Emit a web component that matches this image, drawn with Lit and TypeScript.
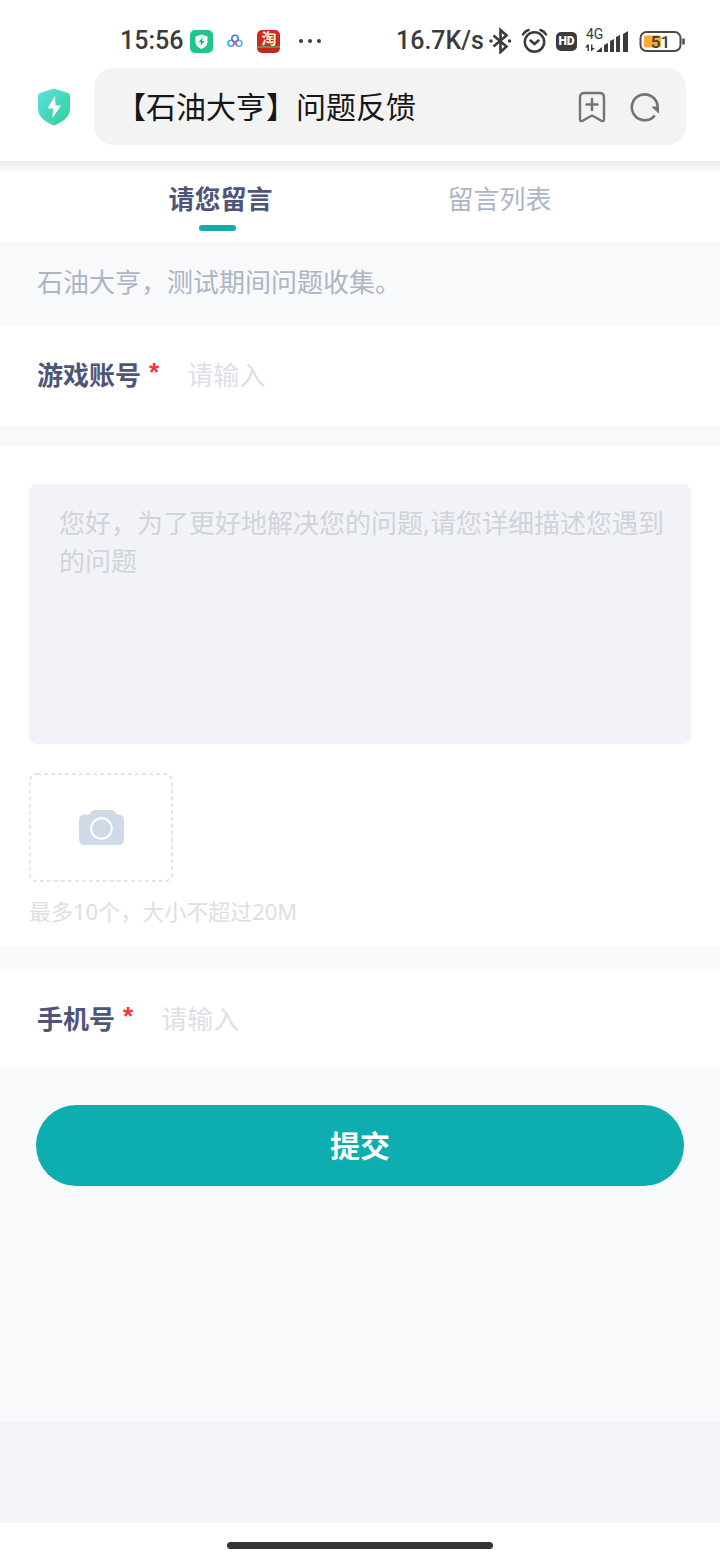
import { LitElement, html, css } from "lit";
import { customElement, property, state } from "lit/decorators.js";
import { classMap } from "lit/directives/class-map.js";

const fontStack = css`"Noto Sans", "Noto Sans CJK SC", sans-serif`;

@customElement("status-bar")
class StatusBar extends LitElement {
  static styles = css`
    :host {
      display: flex;
      justify-content: space-between;
      align-items: center;
      height: 54px;
      padding: 28px 34px 0 120px;
      box-sizing: border-box;
      font-family: Roboto, ${fontStack};
      font-size: 25px;
      line-height: 26px;
      color: #3b3b3b;
    }
    .group {
      display: flex;
      align-items: center;
    }
    .apps {
      gap: 14px;
    }
    .clock {
      margin-right: -7px;
      font-weight: 500;
    }
    .system {
      gap: 8px;
    }
    .rate {
      margin-right: -4px;
      font-weight: 500;
    }
    svg {
      display: block;
      flex: none;
    }
    .taobao {
      width: 23px;
      height: 23px;
      border-radius: 5px;
      background: linear-gradient(#cf2a22 0 70%, #77806a 70% 78%, #c0281f 78%);
      color: #fff3cf;
      font-size: 15px;
      font-weight: 700;
      line-height: 19px;
      text-align: center;
    }
    .more {
      margin-left: 4px;
    }
    .hd {
      width: 21px;
      border-radius: 5px;
      background: #3b3b3b;
      color: #fff;
      font-size: 12px;
      font-weight: 900;
      line-height: 19px;
      text-align: center;
    }
    .net {
      fill: #3b3b3b;
      font-size: 14px;
    }
    .level {
      font-size: 17px;
      font-weight: 500;
    }
  `;

  render() {
    return html`
      <div class="group apps">
        <span class="clock">15:56</span>
        <svg width="23" height="23" viewBox="0 0 23 23">
          <rect width="23" height="23" rx="5" fill="#1fc58a" />
          <path d="M11.500 4.500 17.500 6.500v5.500c0 3.500-2.500 5.600-6 7-3.500-1.400-6-3.500-6-7V6.500Z" fill="#f2fffa" />
          <path d="M12.500 7.500 8.700 12.200h2.400l-.5 3.600 3.800-4.900h-2.500Z" fill="#1fa673" />
        </svg>
        <svg width="16" height="14" viewBox="0 0 16 14" fill="none" stroke-width="1.600">
          <circle cx="4" cy="9.300" r="3" stroke="#35a8ea" />
          <circle cx="12" cy="9.300" r="3" stroke="#4ab0ea" />
          <circle cx="8" cy="4.500" r="3.200" stroke="#4b78e0" />
          <path d="m5.800 7 4.400 4.200M10 7 6 11" stroke="#e75873" />
        </svg>
        <span class="taobao">淘</span>
        <svg class="more" width="24" height="6" viewBox="0 0 24 6" fill="#3b3b3b">
          <circle cx="3" cy="3" r="2" />
          <circle cx="12" cy="3" r="2" />
          <circle cx="21" cy="3" r="2" />
        </svg>
      </div>
      <div class="group system">
        <span class="rate">16.7K/s</span>
        <svg width="25" height="28" viewBox="0 0 25 28" fill="none" stroke="#3b3b3b" stroke-width="2.600">
          <path d="m5.500 8.500 13 11-6 5.500V3l6 5.500-13 11" />
          <circle cx="3" cy="14" r="1" fill="#3b3b3b" stroke-width="1.500" />
          <circle cx="21.500" cy="14" r="1" fill="#3b3b3b" stroke-width="1.500" />
        </svg>
        <svg width="27" height="26" viewBox="0 0 27 26" fill="none" stroke="#3b3b3b" stroke-width="2.500" stroke-linecap="round">
          <circle cx="13.500" cy="14" r="9.700" />
          <path d="m9.500 12.500 4 3.500 4-3.500M2 6.500Q4 3 7.500 2M25 6.500Q23 3 19.500 2" />
        </svg>
        <span class="hd">HD</span>
        <svg class="net" width="46" height="28" viewBox="0 0 46 28">
          <text x="1" y="12">4G</text>
          <path d="M2.500 17.500H4V24H2.500v-3.500H0ZM6 24.500v-7h1.500V21H10Z" />
          <path d="M11 25l6-5v5ZM19 25v-7l4-2v9ZM25 25V14l4-2v13ZM31 25V10l4-2v17ZM38 25V7l5-3v21Z" />
        </svg>
        <svg width="47" height="23" viewBox="0 0 47 23">
          <rect x="1.500" y="2" width="40" height="19" rx="6" fill="#fff" stroke="#4a4a4a" stroke-width="2" />
          <rect x="5" y="5.500" width="17" height="12" rx="1" fill="#f7ac35" />
          <path d="M44.500 8.500v6" stroke="#4a4a4a" stroke-width="2.500" />
          <text class="level" x="21.500" y="17.500" text-anchor="middle" fill="#3b3b3b">51</text>
        </svg>
      </div>
    `;
  }
}

@customElement("browser-bar")
class BrowserBar extends LitElement {
  static styles = css`
    :host {
      display: flex;
      align-items: center;
      gap: 23px;
      padding: 14px 34px 16px 37px;
      font-family: ${fontStack};
      background: #fff;
    }
    .address {
      display: flex;
      flex: 1;
      align-items: center;
      gap: 24px;
      height: 77px;
      padding: 0 26px 0 22px;
      border-radius: 20px;
      background: #f3f3f3;
    }
    .title {
      flex: 1;
      margin: 0;
      font-size: 30px;
      font-weight: 400;
      line-height: 40px;
      color: #161616;
    }
    button {
      padding: 0;
      border: 0;
      background: none;
    }
    svg {
      display: block;
      flex: none;
    }
  `;

  render() {
    return html`
      <svg width="34" height="38" viewBox="0 0 34 38">
        <defs>
          <linearGradient id="shade" x1="0" y1="0" x2="1" y2="1">
            <stop offset="0" stop-color="#5fe0e0" />
            <stop offset="1" stop-color="#2fcf97" />
          </linearGradient>
        </defs>
        <path d="M15.500.900q1.500-.6 3 0L31 5q2 .8 2 2.700V20c0 8-5 12.500-14.500 17q-1.500.7-3 0C6 32.500 1 28 1 20V7.700Q1 5.800 3 5Z" fill="url(#shade)" />
        <path d="M18 8 10.500 20.500h5.500L15.500 30 24 17.500h-5.500Z" fill="#fff" />
      </svg>
      <div class="address">
        <h1 class="title">【石油大亨】问题反馈</h1>
        <button aria-label="收藏">
          <svg width="28" height="32" viewBox="0 0 28 32" fill="none" stroke="#737373" stroke-width="2.400" stroke-linecap="round" stroke-linejoin="round">
            <path d="M2 6.500Q2 2 6.500 2h15Q26 2 26 6.500v21.500q0 3-2.600 1.700L15.500 25.200q-1.500-.9-3 0L4.600 29.700Q2 31 2 28ZM14 8v11M8.500 13.500h11" />
          </svg>
        </button>
        <button aria-label="刷新">
          <svg width="30" height="30" viewBox="0 0 30 30" fill="none" stroke="#737373" stroke-width="2.600" stroke-linecap="round">
            <path d="M24 24.300A12.900 12.900 0 1 1 27.600 14" />
            <path d="M22.500 15h6v5.500Z" fill="#737373" stroke="#737373" stroke-width="1" stroke-linejoin="round" />
          </svg>
        </button>
      </div>
    `;
  }
}

@customElement("text-field")
class TextField extends LitElement {
  @property() label = "";
  @property() type = "text";

  static styles = css`
    :host {
      display: flex;
      align-items: center;
      height: 100px;
      padding: 0 37px;
      box-sizing: border-box;
      background: #fff;
      font-family: ${fontStack};
      font-size: 26px;
      line-height: 38px;
    }
    label {
      font-weight: 700;
      color: #4f5579;
      white-space: nowrap;
    }
    .required {
      margin: 0 28px 0 8px;
      padding-bottom: 6px;
      font-family: "Liberation Sans", sans-serif;
      font-weight: 700;
      color: #f5353a;
    }
    input {
      flex: 1;
      min-width: 0;
      padding: 0;
      border: 0;
      outline: 0;
      background: none;
      font: inherit;
      color: #4f5579;
    }
    input::placeholder {
      color: #dddfe5;
      opacity: 1;
    }
  `;

  render() {
    return html`
      <label for="value">${this.label}</label>
      <span class="required" aria-hidden="true">*</span>
      <input id="value" type=${this.type} placeholder="请输入" required />
    `;
  }
}

@customElement("app-root")
class AppRoot extends LitElement {
  @state() tab = 0;

  static styles = css`
    :host {
      display: flex;
      flex-direction: column;
      min-height: 100vh;
      background: #fff;
      font-family: ${fontStack};
      font-size: 26px;
      line-height: 38px;
    }
    .tabs {
      display: flex;
      height: 80px;
      padding: 0 81px;
      box-sizing: border-box;
      background: linear-gradient(#ebebeb, #f3f3f3 6px, #fff 14px);
    }
    .tab {
      display: flex;
      flex: 1;
      justify-content: center;
      padding: 19px 0 0;
      border: 0;
      background: none;
      font: inherit;
      color: #adb5c6;
    }
    .tab.active {
      font-weight: 700;
      color: #4f5579;
    }
    .tab.active .name::after {
      content: "";
      display: block;
      width: 37px;
      height: 6px;
      margin: 7px 0 0 31px;
      border-radius: 3px;
      background: #14abae;
    }
    .page {
      display: flex;
      flex: 1;
      flex-direction: column;
      background: #f7f9fb;
    }
    .notice {
      margin: 0;
      padding: 22px 37px 24px;
      color: #adb5c4;
    }
    .form {
      display: flex;
      flex-direction: column;
      gap: 22px;
    }
    .detail {
      padding: 37px 29px 18px;
      background: #fff;
    }
    textarea {
      display: block;
      width: 100%;
      height: 260px;
      padding: 20px 24px 20px 30px;
      box-sizing: border-box;
      border: 0;
      border-radius: 8px;
      outline: 0;
      resize: none;
      background: #f2f3f8;
      font: inherit;
      color: #4f5579;
    }
    textarea::placeholder {
      color: #d0d3da;
      opacity: 1;
    }
    .upload {
      display: grid;
      place-items: center;
      width: 144px;
      height: 109px;
      margin: 29px 0 11px;
      padding: 0;
      border: 0;
      background: none;
    }
    .upload svg {
      display: block;
    }
    .hint {
      margin: 0;
      font-size: 22px;
      line-height: 36px;
      color: #dddee6;
    }
    .submit {
      height: 81px;
      margin: 36px 36px 0;
      border: 0;
      border-radius: 41px;
      background: #0dadb0;
      font: inherit;
      font-size: 30px;
      font-weight: 700;
      color: #fff;
    }
    .toolbar {
      height: 101px;
      background: #f3f3f8;
    }
    .home {
      display: flex;
      justify-content: center;
      height: 37px;
      padding-top: 19px;
      box-sizing: border-box;
    }
    .handle {
      width: 37%;
      height: 7px;
      border-radius: 4px;
      background: #333;
    }
  `;

  render() {
    const tabs = ["请您留言", "留言列表"];
    return html`
      <status-bar></status-bar>
      <browser-bar></browser-bar>
      <nav class="tabs">
        ${tabs.map(
          (name, index) => html`
            <button class=${classMap({ tab: true, active: this.tab === index })} @click=${() => (this.tab = index)}>
              <span class="name">${name}</span>
            </button>
          `
        )}
      </nav>
      <main class="page">
        <p class="notice">石油大亨，测试期间问题收集。</p>
        <div class="form">
          <text-field label="游戏账号"></text-field>
          <section class="detail">
            <textarea aria-label="问题描述" placeholder="您好，为了更好地解决您的问题,请您详细描述您遇到的问题"></textarea>
            <button class="upload" aria-label="上传图片">
              <svg width="144" height="109" viewBox="0 0 144 109" fill="none">
                <rect x="1" y="1" width="142" height="107" rx="7" stroke="#dedfe4" stroke-width="1.500" stroke-dasharray="4 3" />
                <path d="M56 37h26q4 0 5.500 4.500H89q6 0 6 6v18.500q0 6-6 6H56q-6 0-6-6V47.500q0-6 6-6h5q1-4.500 5-4.500Z" fill="#cfd9e7" />
                <circle cx="72.500" cy="55.500" r="10.300" stroke="#fff" stroke-width="2" />
              </svg>
            </button>
            <p class="hint">最多10个，大小不超过20M</p>
          </section>
          <text-field label="手机号" type="tel"></text-field>
        </div>
        <button class="submit">提交</button>
      </main>
      <div class="toolbar"></div>
      <div class="home"><div class="handle"></div></div>
    `;
  }
}
